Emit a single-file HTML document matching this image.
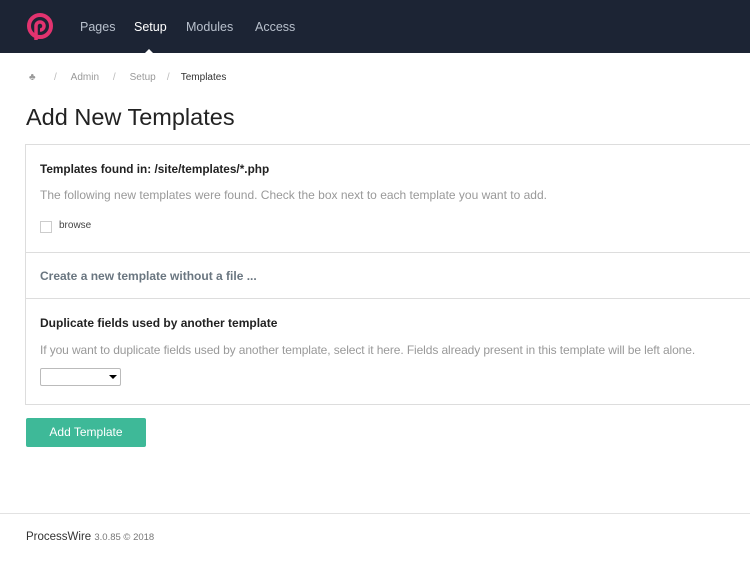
<!DOCTYPE html>
<html><head><style>
body{margin:0;width:750px;height:567px;background:#fff;font-family:"Liberation Sans",sans-serif;position:relative;overflow:hidden}
.nav{position:absolute;left:0;top:0;width:750px;height:53px;background:#1c2434}
.nav span{position:absolute;top:20px;font-size:12.5px;color:#b8c0cc}
.a{position:absolute;white-space:nowrap}
.box{position:absolute;left:25px;top:144px;width:730px;height:259px;border:1px solid #ddd;border-right:none}
.hr{position:absolute;left:25px;width:725px;height:1px;background:#ddd}
</style></head><body>
<div class="nav">
<svg style="position:absolute;left:26px;top:12px" width="28" height="30" viewBox="0 0 28 30"><circle cx="14" cy="14" r="11" fill="none" stroke="#e2336f" stroke-width="4"/><path d="M10 28V14a4 4 0 1 1 4 4" fill="none" stroke="#e2336f" stroke-width="3.5"/></svg>
<span style="left:80px">Pages</span><span style="left:134px;color:#fff">Setup</span><span style="left:186px">Modules</span><span style="left:255px">Access</span>
<div style="position:absolute;left:145px;top:49px;border:4px solid transparent;border-bottom-color:#fff;border-top:0"></div>
</div>
<div class="a" style="left:29px;top:72px;font-size:10px;color:#999">♣</div>
<div class="a" style="left:54px;top:72px;font-size:10px;color:#bbb">/&nbsp;&nbsp;&nbsp;&nbsp;&nbsp;<span style="color:#999">Admin</span>&nbsp;&nbsp;&nbsp;&nbsp;&nbsp;/&nbsp;&nbsp;&nbsp;&nbsp;&nbsp;<span style="color:#999">Setup</span>&nbsp;&nbsp;&nbsp;&nbsp;/&nbsp;&nbsp;&nbsp;&nbsp;<span style="color:#333">Templates</span></div>
<div class="a" style="left:26px;top:104px;font-size:23.5px;color:#222">Add New Templates</div>
<div class="box"></div>
<div class="a" style="left:40px;top:162px;font-size:11.8px;font-weight:bold;color:#222">Templates found in: /site/templates/*.php</div>
<div class="a" style="left:40px;top:188px;font-size:12px;color:#999">The following new templates were found. Check the box next to each template you want to add.</div>
<div class="a" style="left:40px;top:221px;width:10px;height:10px;border:1px solid #ccc"></div>
<div class="a" style="left:59px;top:220px;font-size:10px;color:#444">browse</div>
<div class="hr" style="top:252px"></div>
<div class="a" style="left:40px;top:269px;font-size:12px;font-weight:bold;color:#6a7680">Create a new template without a file ...</div>
<div class="hr" style="top:298px"></div>
<div class="a" style="left:40px;top:316px;font-size:12px;font-weight:bold;color:#222">Duplicate fields used by another template</div>
<div class="a" style="left:40px;top:343px;font-size:12px;color:#999;letter-spacing:-0.1px">If you want to duplicate fields used by another template, select it here. Fields already present in this template will be left alone.</div>
<div class="a" style="left:40px;top:368px;width:79px;height:16px;border:1px solid #bbb;border-radius:2px"><div style="position:absolute;right:3px;top:6px;border:4px solid transparent;border-top-color:#000;border-bottom:0"></div></div>
<div class="a" style="left:26px;top:418px;width:120px;height:29px;background:#3eb998;border-radius:2px;color:#fff;font-size:12px;text-align:center;line-height:29px">Add Template</div>
<div class="a" style="left:0;top:513px;width:750px;height:1px;background:#e2e2e2"></div>
<div class="a" style="left:26px;top:531px;font-size:11.5px;color:#333">ProcessWire <span style="font-size:9.5px;color:#777">3.0.85 © 2018</span></div>
</body></html>
